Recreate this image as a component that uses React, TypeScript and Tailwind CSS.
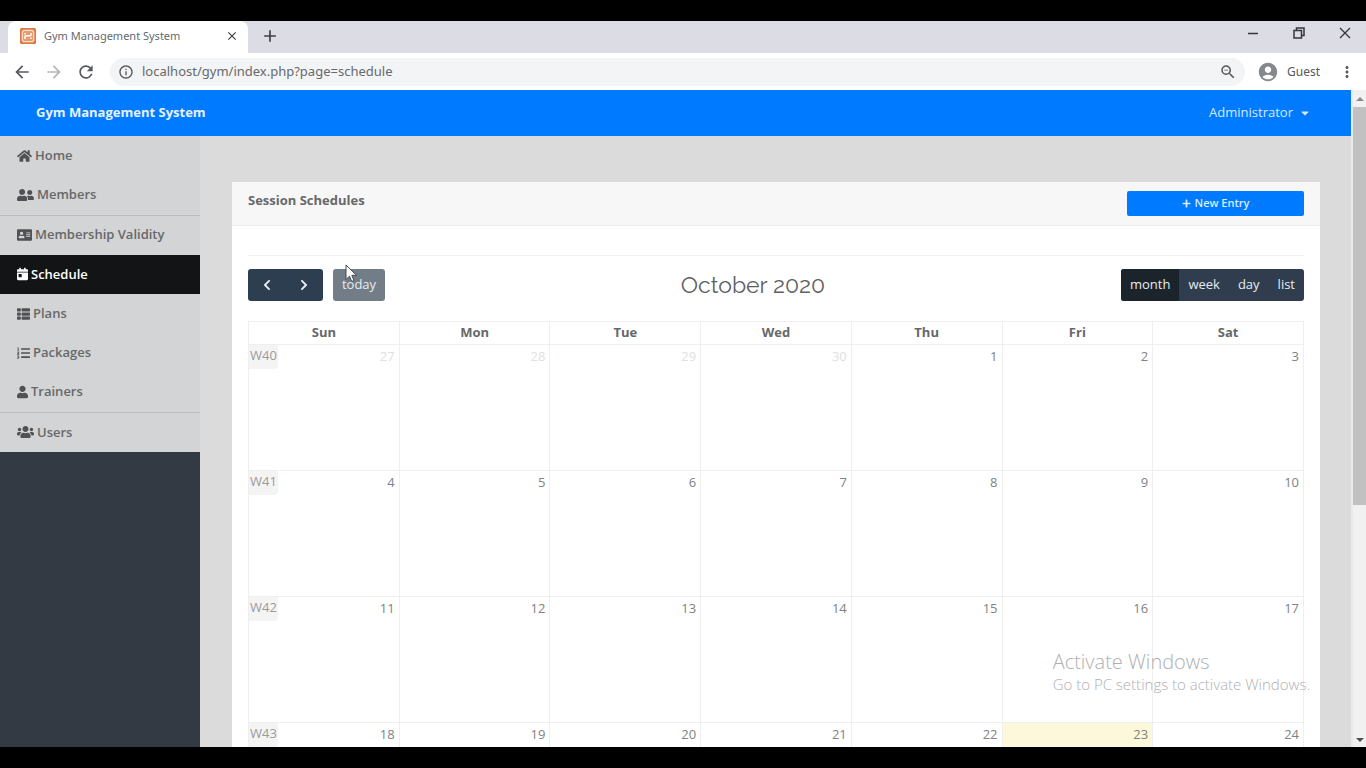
import React from "react";
import {
  FaHome,
  FaUserFriends,
  FaAddressCard,
  FaCalendarDay,
  FaThList,
  FaListOl,
  FaUser,
  FaUsers,
  FaPlus,
  FaCaretDown,
  FaChevronLeft,
  FaChevronRight,
} from "react-icons/fa";
import {
  MdArrowBack,
  MdArrowForward,
  MdRefresh,
  MdInfoOutline,
  MdZoomOut,
  MdAccountCircle,
  MdMoreVert,
  MdClose,
  MdAdd,
} from "react-icons/md";

const menu = [
  { label: "Home", icon: FaHome, size: "w-[15px]" },
  { label: "Members", icon: FaUserFriends, size: "w-[17px]", line: true },
  { label: "Membership Validity", icon: FaAddressCard, size: "w-[15px]" },
  { label: "Schedule", icon: FaCalendarDay, size: "w-[11px]", active: true },
  { label: "Plans", icon: FaThList, size: "w-[13px]" },
  { label: "Packages", icon: FaListOl, size: "w-[13px]" },
  { label: "Trainers", icon: FaUser, size: "w-[11px]", line: true },
  { label: "Users", icon: FaUsers, size: "w-[17px]" },
];

const days = ["Sun", "Mon", "Tue", "Wed", "Thu", "Fri", "Sat"];

const weeks = [
  { name: "W40", dates: [27, 28, 29, 30, 1, 2, 3] },
  { name: "W41", dates: [4, 5, 6, 7, 8, 9, 10] },
  { name: "W42", dates: [11, 12, 13, 14, 15, 16, 17] },
  { name: "W43", dates: [18, 19, 20, 21, 22, 23, 24] },
];

function XamppIcon() {
  return (
    <svg viewBox="0 0 16 16" className="size-4" aria-hidden="true">
      <rect width="16" height="16" rx="1.5" fill="#e07b45" />
      <rect x="2.300" y="2.300" width="11.400" height="11.400" rx="2.500" fill="#ea9a6c" stroke="#fbe3d4" strokeWidth="1.200" />
      <path d="M5 11V8.500Q5 7.800 5.700 7.800H10.300Q11 7.800 11 7.100V5M5 5v1.300M11 11V9.500" fill="none" stroke="#fff" strokeWidth="1.500" />
    </svg>
  );
}

function TabStrip() {
  return (
    <div className="flex h-8 shrink-0 items-stretch bg-[#dcdde4]">
      <div className="ml-2 flex w-60 items-center rounded-t-lg bg-white pr-2 pb-0.5 pl-3 text-[#66696d]">
        <XamppIcon />
        <span className="ml-2 flex-1 font-['Noto_Sans',sans-serif] text-[11px]">Gym Management System</span>
        <button aria-label="Close tab" className="flex size-4 items-center justify-center text-[#3c4043]">
          <MdClose size={14} />
        </button>
      </div>
      <button aria-label="New tab" className="ml-3 flex items-center pb-0.5 text-[#3c4043]">
        <MdAdd size={20} />
      </button>
      <div className="ml-auto flex items-center gap-8 pr-3.5 pb-2 text-[#33363b]">
        <button aria-label="Minimize">
          <svg viewBox="0 0 14 14" className="size-3.5">
            <path d="M2 7.5h10" stroke="currentColor" strokeWidth="1.5" />
          </svg>
        </button>
        <button aria-label="Restore">
          <svg viewBox="0 0 14 14" className="size-3.5" fill="none" stroke="currentColor" strokeWidth="1.5">
            <path d="M2 4.500h7.500V12H2zM4.500 4.500V2H12v7.500H9.500" />
          </svg>
        </button>
        <button aria-label="Close window">
          <svg viewBox="0 0 14 14" className="size-3.5">
            <path d="M2 2l10 10M12 2L2 12" stroke="currentColor" strokeWidth="1.3" />
          </svg>
        </button>
      </div>
    </div>
  );
}

function Toolbar() {
  return (
    <div className="flex h-[37px] shrink-0 items-center bg-white pr-2.5 pl-3 font-['Noto_Sans',sans-serif] text-[#55585c]">
      <button aria-label="Back">
        <MdArrowBack size={20} />
      </button>
      <button aria-label="Forward" className="ml-3 text-[#b4b6b9]">
        <MdArrowForward size={20} />
      </button>
      <button aria-label="Reload" className="ml-3">
        <MdRefresh size={20} />
      </button>
      <div className="ml-3.5 flex h-7 flex-1 items-center rounded-full bg-[#f3f4f5] pr-2 pl-2">
        <MdInfoOutline size={16} />
        <input
          aria-label="Address"
          readOnly
          value="localhost/gym/index.php?page=schedule"
          className="ml-2 min-w-0 flex-1 bg-transparent text-[13px] text-[#66696d] outline-none"
        />
        <MdZoomOut size={18} />
      </div>
      <button className="ml-3 flex items-center rounded-full pr-1.5 text-[12px] text-[#55585c]">
        <MdAccountCircle size={22} className="mr-2 text-[#85888c]" />
        Guest
      </button>
      <button aria-label="Menu" className="ml-3">
        <MdMoreVert size={18} />
      </button>
    </div>
  );
}

function Sidebar() {
  return (
    <aside className="w-[200px] shrink-0 bg-[#343a43]">
      <nav className="flex h-[316px] flex-col bg-[#d3d4d5]">
        {menu.map(({ label, icon: Icon, size, active, line }) => (
          <a
            key={label}
            href="#"
            className={
              "flex flex-1 items-center gap-[3px] pl-[17px] text-[13px] font-semibold " +
              (active ? "bg-[#131416] text-white" : "text-[#66686a] ") +
              (line ? " border-b border-[#bcbdbf]" : "")
            }
          >
            <Icon className={"h-3.5 shrink-0 " + size + (active ? "" : " text-[#4f5154]")} />
            {label}
          </a>
        ))}
      </nav>
    </aside>
  );
}

function Calendar() {
  return (
    <table className="w-full table-fixed border-collapse border border-[#efefef] text-[13px]">
      <thead>
        <tr>
          {days.map((d) => (
            <th key={d} className="h-[23px] border border-[#efefef] p-0 pb-0.5 leading-5 font-bold text-[#66686a]">
              {d}
            </th>
          ))}
        </tr>
      </thead>
      <tbody>
        {weeks.map((w, row) => (
          <tr key={w.name}>
            {w.dates.map((n, col) => (
              <td
                key={n}
                className={
                  "h-[126px] border border-[#efefef] p-0 align-top " + (n === 23 ? "bg-[#fcf8d9]" : "")
                }
              >
                <div className="flex items-start justify-between pr-1">
                  {col === 0 ? (
                    <span className="rounded-br bg-[#f4f4f4] px-px pb-1 leading-5 text-[#999b9c]">{w.name}</span>
                  ) : (
                    <span />
                  )}
                  <span
                    className={
                      "pt-px leading-5 " + (row === 0 && n > 20 ? "text-[#e0e0e0]" : "text-[#808284]")
                    }
                  >
                    {n}
                  </span>
                </div>
              </td>
            ))}
          </tr>
        ))}
      </tbody>
    </table>
  );
}

function ScheduleCard() {
  return (
    <section className="bg-white">
      <header className="flex h-11 items-center justify-between border-b border-[#ececec] bg-[#f7f7f7] px-4">
        <h1 className="pb-1.5 text-[13px] font-bold text-[#66686a]">Session Schedules</h1>
        <button className="flex h-[25px] w-[177px] items-center justify-center gap-1 rounded-xs bg-[#007bff] text-[11px] font-semibold text-[#d9ebff]">
          <FaPlus size={9} />
          New Entry
        </button>
      </header>
      <div className="px-4 pt-[29px]">
        <hr className="border-[#f0f0f0]" />
        <div className="mt-[13px] mb-5 flex h-8 items-center justify-between text-[13px] text-[#e6ebf0]">
          <div className="flex h-full">
            <div className="flex w-[75px] rounded-[3px] bg-[#2c3e50]">
              <button aria-label="Previous month" className="flex flex-1 items-center justify-center">
                <FaChevronLeft size={12} />
              </button>
              <button aria-label="Next month" className="flex flex-1 items-center justify-center">
                <FaChevronRight size={12} />
              </button>
            </div>
            <button className="ml-2.5 w-[52px] rounded-[3px] bg-[#737d88]">today</button>
          </div>
          <h2 className="font-['Raleway','Lato',sans-serif] text-[23px] text-[#5f6163]">October 2020</h2>
          <div className="flex h-full overflow-hidden rounded-[3px] bg-[#2f3d4e]">
            <button className="bg-[#1c242b] px-[9px]">month</button>
            <button className="px-[9px]">week</button>
            <button className="px-[9px]">day</button>
            <button className="px-[9px]">list</button>
          </div>
        </div>
        <Calendar />
      </div>
    </section>
  );
}

export default function App() {
  return (
    <div className="h-screen bg-black py-[21px] font-['Open_Sans',sans-serif]">
      <div className="relative flex h-full flex-col overflow-hidden bg-white">
        <TabStrip />
        <Toolbar />
        <div className="flex min-h-0 flex-1">
          <div className="flex min-w-0 flex-1 flex-col">
            <header className="flex h-[46px] shrink-0 items-center justify-between bg-[#007bff] pr-10 pl-9 text-[13px] text-[#e6f2ff]">
              <a href="#" className="font-bold">
                Gym Management System
              </a>
              <button className="flex items-center gap-1.5 text-[#d6e9ff]">
                Administrator
                <FaCaretDown size={12} />
              </button>
            </header>
            <div className="flex min-h-0 flex-1">
              <Sidebar />
              <main className="min-w-0 flex-1 overflow-hidden bg-[#dbdbdb] pt-[46px] pr-[31px] pl-8">
                <ScheduleCard />
              </main>
            </div>
          </div>
          <div className="flex w-[15px] shrink-0 flex-col items-center border-l-2 border-[#ebebeb] bg-[#f1f1f1]" aria-hidden="true">
            <svg viewBox="0 0 8 5" className="my-1.5 h-[5px] w-2">
              <path d="M0 5l4-4 4 4z" fill="#8a8a8a" />
            </svg>
            <div className="h-[398px] w-full bg-[#c1c1c1]" />
            <svg viewBox="0 0 8 5" className="mt-auto mb-1 h-[5px] w-2">
              <path d="M0 0l4 4 4-4z" fill="#505050" />
            </svg>
          </div>
        </div>
        <div className="pointer-events-none absolute right-14 bottom-[53px] text-[#b0b0b0]">
          <p className="text-[20px] leading-6 font-light">Activate Windows</p>
          <p className="text-[15px] leading-5 font-light">Go to PC settings to activate Windows.</p>
        </div>
        <svg viewBox="0 0 12 19" className="pointer-events-none absolute top-[243px] left-[345px] h-[19px] w-3" aria-hidden="true">
          <path d="M1 1v14.500l3.500-3.300 2.200 5.300 2.300-1-2.200-5.200H11.500z" fill="#fff" stroke="#444b55" />
        </svg>
      </div>
    </div>
  );
}
